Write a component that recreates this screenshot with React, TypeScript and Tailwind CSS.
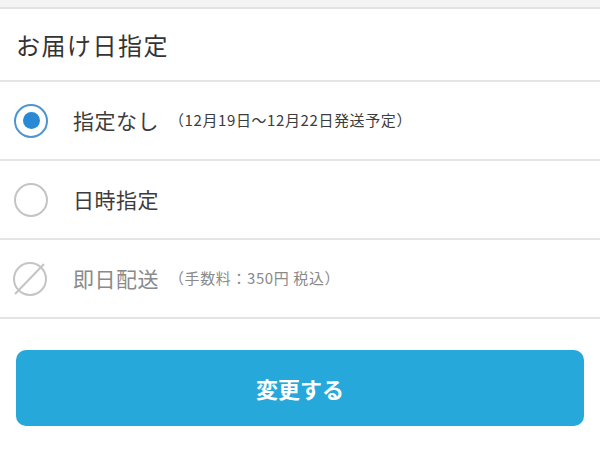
import React from 'react'

const font = { fontFamily: '"Noto Sans CJK JP", "Noto Sans", sans-serif' }

function Radio({ state }: { state: 'checked' | 'empty' | 'disabled' }) {
  if (state === 'checked') {
    return (
      <span className="flex h-[34px] w-[34px] items-center justify-center rounded-full border-2 border-[#4d95d0]">
        <span className="h-[17px] w-[17px] rounded-full bg-[#2a89d4]" />
      </span>
    )
  }
  if (state === 'empty') {
    return <span className="block h-[34px] w-[34px] rounded-full border-2 border-[#c4c4c4]" />
  }
  return (
    <svg width="38" height="38" viewBox="0 0 38 38" className="-ml-0.5">
      <circle cx="19" cy="19" r="16" fill="none" stroke="#c4c4c4" strokeWidth="2" />
      <line x1="4" y1="34" x2="33" y2="4" stroke="#c4c4c4" strokeWidth="2" />
    </svg>
  )
}

function Row({
  state,
  label,
  note,
}: {
  state: 'checked' | 'empty' | 'disabled'
  label: string
  note?: string
}) {
  const disabled = state === 'disabled'
  return (
    <div className="flex h-[79px] items-center border-b-2 border-[#e4e4e4] pl-[12px]">
      <div className="flex w-[38px] items-center justify-center">
        <Radio state={state} />
      </div>
      <span
        className={`ml-[23px] text-[21px] tracking-[0.5px] ${disabled ? 'text-[#8a8a8a]' : 'text-[#3c3c3c]'}`}
      >
        {label}
      </span>
      {note && (
        <span
          className={`ml-[10px] text-[15px] tracking-[0.6px] ${disabled ? 'text-[#8a8a8a]' : 'text-[#3c3c3c]'}`}
        >
          {note}
        </span>
      )}
    </div>
  )
}

export default function App() {
  return (
    <div className="h-[472px] w-[600px] bg-white" style={font}>
      <div className="h-[9px] border-b-2 border-[#e2e2e2] bg-[#f3f3f3]" />
      <div className="flex h-[73px] items-center border-b-2 border-[#e4e4e4] pl-[16px]">
        <h1 className="text-[24px] tracking-[1.5px] text-[#333]">お届け日指定</h1>
      </div>
      <Row state="checked" label="指定なし" note="（12月19日〜12月22日発送予定）" />
      <Row state="empty" label="日時指定" />
      <Row state="disabled" label="即日配送" note="（手数料：350円 税込）" />
      <div className="px-[16px] pt-[31px]">
        <button
          type="button"
          className="flex h-[76px] w-full items-center justify-center rounded-[10px] bg-[#27a8da] text-[22px] font-bold text-white"
        >
          変更する
        </button>
      </div>
    </div>
  )
}
